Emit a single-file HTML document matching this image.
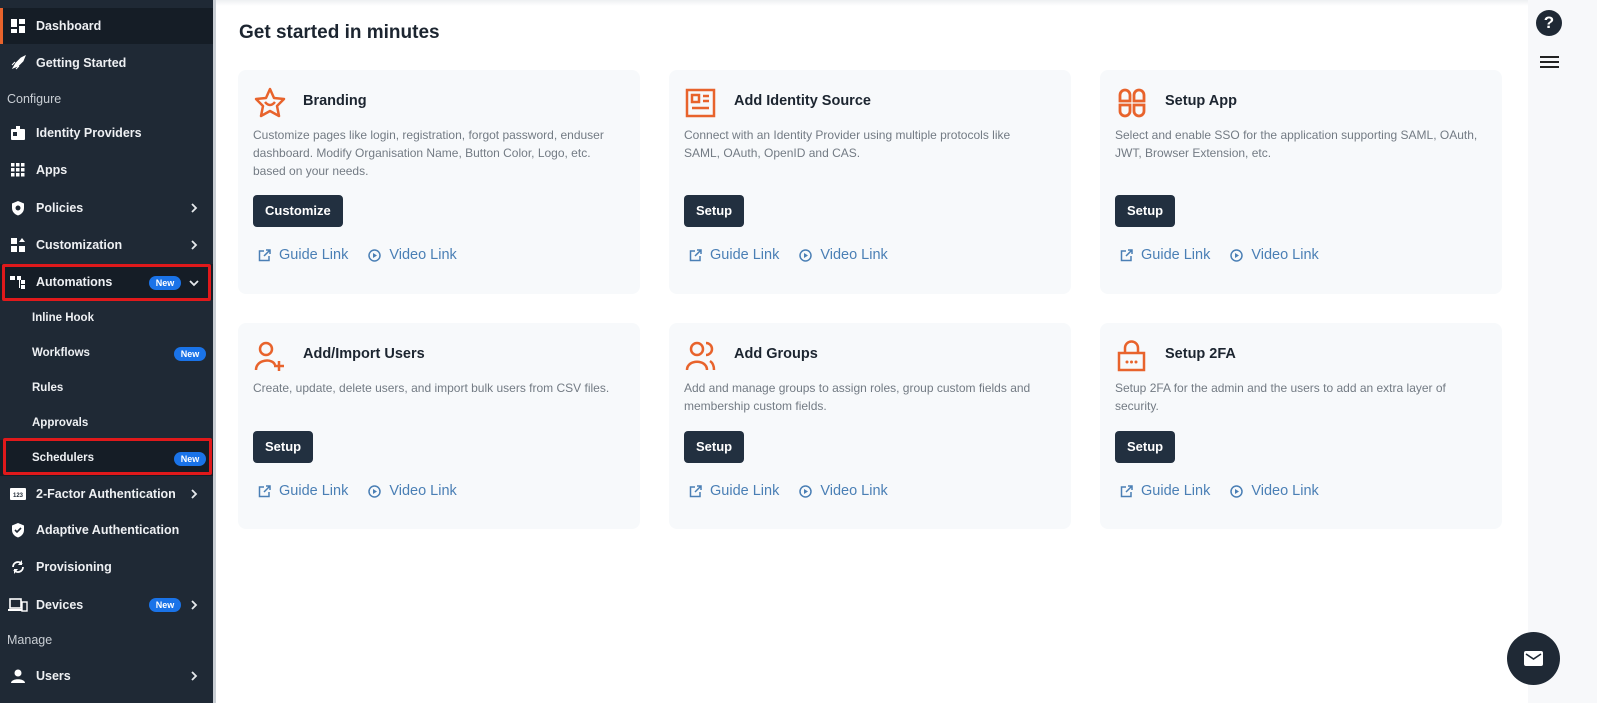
<!DOCTYPE html>
<html><head><meta charset="utf-8"><style>
*{box-sizing:border-box;margin:0;padding:0}
body{width:1597px;height:703px;overflow:hidden;background:#fff;font-family:"Liberation Sans",sans-serif;position:relative}
.sb{position:absolute;left:0;top:0;width:213px;height:703px;background:#1f2935;color:#fff}
.sbar{position:absolute;left:213px;top:0;width:3px;height:703px;background:#c9ced4}
.it{position:absolute;left:0;width:213px;height:36px;display:flex;align-items:center;font-size:12.5px;font-weight:bold;color:#eef0f3}
.it .ic{width:16px;height:16px;margin:0 10px 0 10px;display:flex;align-items:center;justify-content:center}
.sub{padding-left:32px;font-size:11.5px}
.sec{position:absolute;left:7px;font-size:12.5px;color:#c9ced4}
.new{position:absolute;background:#1a73e8;color:#fff;font-size:9px;font-weight:bold;border-radius:8px;padding:2px 0;width:32px;text-align:center}
.chev{position:absolute;left:190px}
.red{position:absolute;border:3px solid #e0191b;border-radius:2px}
h1{position:absolute;left:239px;top:22px;font-size:19px;font-weight:bold;color:#1c2530}
.card{position:absolute;width:402px;background:#f7f9fb;border-radius:8px}
.card .ti{position:absolute;left:65px;top:23px;font-size:14.5px;font-weight:bold;color:#1c2530}
.card .ico{position:absolute;left:15px;top:16px;width:34px;height:34px}
.card p{position:absolute;left:15px;top:56px;white-space:nowrap;font-size:12px;line-height:18px;color:#737b84}
.btn{position:absolute;left:15px;background:#223040;color:#fff;font-size:13px;font-weight:bold;border-radius:4px;height:32px;line-height:32px;padding:0 12px}
.lk{position:absolute;left:20px;font-size:14.5px;color:#4a7fb5;display:flex;align-items:center}
.lk svg{margin-right:8px}
.rs{position:absolute;left:1528px;top:0;width:69px;height:703px;background:#f7f8fa}
</style></head><body>
<div class="sb">
 <div class="it" style="top:8px;background:#151d26"><div style="position:absolute;left:0;top:0;width:3px;height:36px;background:#e8632c"></div><span class="ic"><svg width="16" height="16"><rect x="1" y="1" width="6" height="8" fill="#fff"/><rect x="9" y="1" width="6" height="5" fill="#fff"/><rect x="1" y="11" width="6" height="4" fill="#fff"/><rect x="9" y="8" width="6" height="7" fill="#fff"/></svg></span>Dashboard</div>
 <div class="it" style="top:45px"><span class="ic"><svg width="16" height="16"><path d="M3 13 L6 8 L11 3 L15 1 L13 6 L8 11Z M2 10 L5 7 M6 14 L9 11" fill="#fff" stroke="#fff"/></svg></span>Getting Started</div>
 <div class="sec" style="top:92px">Configure</div>
 <div class="it" style="top:115px"><span class="ic"><svg width="16" height="16"><rect x="1" y="4" width="14" height="11" rx="1" fill="#fff"/><rect x="6" y="1" width="4" height="4" fill="#fff"/><rect x="3" y="7" width="4" height="4" fill="#1f2935"/></svg></span>Identity Providers</div>
 <div class="it" style="top:152px"><span class="ic"><svg width="14" height="14"><g fill="#fff"><rect x="0" y="0" width="3.5" height="3.5"/><rect x="5" y="0" width="3.5" height="3.5"/><rect x="10" y="0" width="3.5" height="3.5"/><rect x="0" y="5" width="3.5" height="3.5"/><rect x="5" y="5" width="3.5" height="3.5"/><rect x="10" y="5" width="3.5" height="3.5"/><rect x="0" y="10" width="3.5" height="3.5"/><rect x="5" y="10" width="3.5" height="3.5"/><rect x="10" y="10" width="3.5" height="3.5"/></g></svg></span>Apps</div>
 <div class="it" style="top:190px"><span class="ic"><svg width="16" height="16"><path d="M8 1 L14 3.5 V8 C14 12 11 14.5 8 15.5 C5 14.5 2 12 2 8 V3.5Z" fill="#fff"/><circle cx="8" cy="8" r="2.5" fill="#1f2935"/></svg></span>Policies</div><svg class="chev" style="top:203px" width="8" height="10"><path d="M2 1 L6 5 L2 9" stroke="#e6e9ec" stroke-width="1.8" fill="none"/></svg>
 <div class="it" style="top:227px"><span class="ic"><svg width="16" height="16"><g fill="#fff"><rect x="1" y="1" width="6" height="6"/><rect x="1" y="9" width="6" height="6"/><rect x="9" y="9" width="6" height="6"/><path d="M12 1 L15 5 H9Z"/></g></svg></span>Customization</div><svg class="chev" style="top:240px" width="8" height="10"><path d="M2 1 L6 5 L2 9" stroke="#e6e9ec" stroke-width="1.8" fill="none"/></svg>
 <div class="it" style="top:264px;background:#151d26"><span class="ic"><svg width="16" height="16"><g fill="#fff"><rect x="0" y="2" width="5" height="4"/><rect x="7" y="2" width="4" height="4"/><rect x="11" y="6" width="4" height="4"/><rect x="11" y="11" width="4" height="4"/><rect x="9" y="6" width="1" height="8"/></g></svg></span>Automations</div>
 <span class="new" style="left:149px;top:276px">New</span><svg class="chev" style="left:189px;top:279px" width="10" height="8"><path d="M1 2 L5 6 L9 2" stroke="#e6e9ec" stroke-width="1.8" fill="none"/></svg>
 <div class="red" style="left:2px;top:264px;width:209px;height:37px"></div>
 <div class="it sub" style="top:300px">Inline Hook</div>
 <div class="it sub" style="top:335px">Workflows</div><span class="new" style="left:174px;top:347px">New</span>
 <div class="it sub" style="top:370px">Rules</div>
 <div class="it sub" style="top:405px">Approvals</div>
 <div class="it sub" style="top:440px;background:#151d26">Schedulers</div><span class="new" style="left:174px;top:452px">New</span>
 <div class="red" style="left:3px;top:438px;width:209px;height:37px"></div>
 <div class="it" style="top:476px"><span class="ic"><svg width="16" height="12"><rect x="0" y="0" width="16" height="12" rx="1" fill="#fff"/><text x="8" y="9" font-size="6" text-anchor="middle" fill="#1f2935" font-family="Liberation Sans">123</text></svg></span>2-Factor Authentication</div><svg class="chev" style="top:489px" width="8" height="10"><path d="M2 1 L6 5 L2 9" stroke="#e6e9ec" stroke-width="1.8" fill="none"/></svg>
 <div class="it" style="top:512px"><span class="ic"><svg width="16" height="16"><path d="M8 1 L14 3.5 V8 C14 12 11 14.5 8 15.5 C5 14.5 2 12 2 8 V3.5Z" fill="#fff"/><path d="M5 8 L7 10 L11 6" stroke="#1f2935" stroke-width="1.6" fill="none"/></svg></span>Adaptive Authentication</div>
 <div class="it" style="top:549px"><span class="ic"><svg width="16" height="16"><path d="M3 8 A5 5 0 0 1 12 5 M13 8 A5 5 0 0 1 4 11" stroke="#fff" stroke-width="1.8" fill="none"/><path d="M12 1 V6 H8Z M4 15 V10 H8Z" fill="#fff"/></svg></span>Provisioning</div>
 <div class="it" style="top:587px"><span class="ic" style="margin-left:8px;margin-right:8px;width:20px"><svg width="20" height="14"><rect x="2" y="1" width="11" height="9" stroke="#fff" stroke-width="1.6" fill="none"/><rect x="0" y="11" width="14" height="2" fill="#fff"/><rect x="14" y="4" width="5" height="9" stroke="#fff" stroke-width="1.4" fill="#1f2935"/></svg></span>Devices</div>
 <span class="new" style="left:149px;top:598px">New</span><svg class="chev" style="top:600px" width="8" height="10"><path d="M2 1 L6 5 L2 9" stroke="#e6e9ec" stroke-width="1.8" fill="none"/></svg>
 <div class="sec" style="top:633px">Manage</div>
 <div class="it" style="top:658px"><span class="ic"><svg width="16" height="16"><circle cx="8" cy="5" r="3.5" fill="#fff"/><path d="M1 15 C1 10 15 10 15 15Z" fill="#fff"/></svg></span>Users</div><svg class="chev" style="top:671px" width="8" height="10"><path d="M2 1 L6 5 L2 9" stroke="#e6e9ec" stroke-width="1.8" fill="none"/></svg>
</div>
<div class="sbar"></div>
<div class="rs"></div>
<div style="position:absolute;left:216px;top:0;width:1312px;height:6px;background:linear-gradient(#eef0f2,#fff)"></div>
<h1>Get started in minutes</h1>

<div class="card" style="left:238px;top:70px;height:224px">
 <svg class="ico" viewBox="0 0 34 34"><path d="M17 3 L21 12 L31 13 L24 20 L26 30 L17 25 L8 30 L10 20 L3 13 L13 12Z" fill="none" stroke="#e8632c" stroke-width="2.5" stroke-linejoin="round"/><path d="M12 16 Q17 22 22 16" fill="none" stroke="#e8632c" stroke-width="2.5"/></svg>
 <div class="ti">Branding</div>
 <p>Customize pages like login, registration, forgot password, enduser<br>dashboard. Modify Organisation Name, Button Color, Logo, etc.<br>based on your needs.</p>
 <div class="btn" style="top:125px">Customize</div>
 <div class="lk" style="top:177px"><svg width="13" height="13"><path d="M6 2 H1.5 V11.5 H11 V7 M8 1 H12 V5 M12 1 L6 7" stroke="#4a7fb5" stroke-width="1.5" fill="none"/></svg>Guide Link<span style="width:20px"></span><svg width="13" height="13"><circle cx="6.5" cy="6.5" r="5.5" stroke="#4a7fb5" stroke-width="1.5" fill="none"/><path d="M5 4 L9 6.5 L5 9Z" fill="#4a7fb5"/></svg>Video Link</div>
</div>
<div class="card" style="left:669px;top:70px;height:224px">
 <svg class="ico" viewBox="0 0 34 34"><rect x="3" y="4" width="27" height="26" fill="none" stroke="#e8632c" stroke-width="2.5"/><rect x="8" y="9" width="7" height="7" fill="none" stroke="#e8632c" stroke-width="2.5"/><path d="M19 10 H25 M19 15 H25 M8 22 H25" stroke="#e8632c" stroke-width="2.5"/></svg>
 <div class="ti">Add Identity Source</div>
 <p>Connect with an Identity Provider using multiple protocols like<br>SAML, OAuth, OpenID and CAS.</p>
 <div class="btn" style="top:125px">Setup</div>
 <div class="lk" style="top:177px"><svg width="13" height="13"><path d="M6 2 H1.5 V11.5 H11 V7 M8 1 H12 V5 M12 1 L6 7" stroke="#4a7fb5" stroke-width="1.5" fill="none"/></svg>Guide Link<span style="width:20px"></span><svg width="13" height="13"><circle cx="6.5" cy="6.5" r="5.5" stroke="#4a7fb5" stroke-width="1.5" fill="none"/><path d="M5 4 L9 6.5 L5 9Z" fill="#4a7fb5"/></svg>Video Link</div>
</div>
<div class="card" style="left:1100px;top:70px;height:224px">
 <svg class="ico" viewBox="0 0 34 34"><g fill="none" stroke="#e8632c" stroke-width="2.8"><path d="M5 15 V9 A5 5 0 0 1 15 9 V15Z"/><path d="M19 15 V9 A5 5 0 0 1 29 9 V15Z"/><path d="M5 19 V25 A5 5 0 0 0 15 25 V19Z"/><path d="M19 19 V25 A5 5 0 0 0 29 25 V19Z"/></g></svg>
 <div class="ti">Setup App</div>
 <p>Select and enable SSO for the application supporting SAML, OAuth,<br>JWT, Browser Extension, etc.</p>
 <div class="btn" style="top:125px">Setup</div>
 <div class="lk" style="top:177px"><svg width="13" height="13"><path d="M6 2 H1.5 V11.5 H11 V7 M8 1 H12 V5 M12 1 L6 7" stroke="#4a7fb5" stroke-width="1.5" fill="none"/></svg>Guide Link<span style="width:20px"></span><svg width="13" height="13"><circle cx="6.5" cy="6.5" r="5.5" stroke="#4a7fb5" stroke-width="1.5" fill="none"/><path d="M5 4 L9 6.5 L5 9Z" fill="#4a7fb5"/></svg>Video Link</div>
</div>
<div class="card" style="left:238px;top:323px;height:206px">
 <svg class="ico" viewBox="0 0 34 34"><circle cx="13" cy="10" r="6" fill="none" stroke="#e8632c" stroke-width="2.5"/><path d="M3 31 C3 20 20 19 22 26" fill="none" stroke="#e8632c" stroke-width="2.5"/><path d="M26 22 V32 M21 27 H31" stroke="#e8632c" stroke-width="2.5"/></svg>
 <div class="ti">Add/Import Users</div>
 <p>Create, update, delete users, and import bulk users from CSV files.</p>
 <div class="btn" style="top:108px">Setup</div>
 <div class="lk" style="top:160px"><svg width="13" height="13"><path d="M6 2 H1.5 V11.5 H11 V7 M8 1 H12 V5 M12 1 L6 7" stroke="#4a7fb5" stroke-width="1.5" fill="none"/></svg>Guide Link<span style="width:20px"></span><svg width="13" height="13"><circle cx="6.5" cy="6.5" r="5.5" stroke="#4a7fb5" stroke-width="1.5" fill="none"/><path d="M5 4 L9 6.5 L5 9Z" fill="#4a7fb5"/></svg>Video Link</div>
</div>
<div class="card" style="left:669px;top:323px;height:206px">
 <svg class="ico" viewBox="0 0 34 34"><circle cx="13" cy="10" r="6" fill="none" stroke="#e8632c" stroke-width="2.5"/><path d="M3 31 C3 20 23 20 23 31" fill="none" stroke="#e8632c" stroke-width="2.5"/><path d="M22 4 A6 6 0 0 1 22 16 M26 22 C29 24 30 27 30 31" fill="none" stroke="#e8632c" stroke-width="2.5"/></svg>
 <div class="ti">Add Groups</div>
 <p>Add and manage groups to assign roles, group custom fields and<br>membership custom fields.</p>
 <div class="btn" style="top:108px">Setup</div>
 <div class="lk" style="top:160px"><svg width="13" height="13"><path d="M6 2 H1.5 V11.5 H11 V7 M8 1 H12 V5 M12 1 L6 7" stroke="#4a7fb5" stroke-width="1.5" fill="none"/></svg>Guide Link<span style="width:20px"></span><svg width="13" height="13"><circle cx="6.5" cy="6.5" r="5.5" stroke="#4a7fb5" stroke-width="1.5" fill="none"/><path d="M5 4 L9 6.5 L5 9Z" fill="#4a7fb5"/></svg>Video Link</div>
</div>
<div class="card" style="left:1100px;top:323px;height:206px">
 <svg class="ico" viewBox="0 0 34 34"><rect x="4" y="14" width="25" height="17" fill="none" stroke="#e8632c" stroke-width="2.5"/><path d="M10 14 V9 A6.5 6.5 0 0 1 23 9 V14" fill="none" stroke="#e8632c" stroke-width="2.5"/><g fill="#e8632c"><circle cx="12" cy="23" r="1.5"/><circle cx="16.5" cy="23" r="1.5"/><circle cx="21" cy="23" r="1.5"/></g></svg>
 <div class="ti">Setup 2FA</div>
 <p>Setup 2FA for the admin and the users to add an extra layer of<br>security.</p>
 <div class="btn" style="top:108px">Setup</div>
 <div class="lk" style="top:160px"><svg width="13" height="13"><path d="M6 2 H1.5 V11.5 H11 V7 M8 1 H12 V5 M12 1 L6 7" stroke="#4a7fb5" stroke-width="1.5" fill="none"/></svg>Guide Link<span style="width:20px"></span><svg width="13" height="13"><circle cx="6.5" cy="6.5" r="5.5" stroke="#4a7fb5" stroke-width="1.5" fill="none"/><path d="M5 4 L9 6.5 L5 9Z" fill="#4a7fb5"/></svg>Video Link</div>
</div>

<div style="position:absolute;left:1536px;top:10px;width:26px;height:26px;border-radius:50%;background:#1f2935;color:#fff;font-weight:bold;font-size:17px;text-align:center;line-height:26px">?</div>
<div style="position:absolute;left:1540px;top:56px;width:19px;height:2px;background:#222;box-shadow:0 5px 0 #222,0 10px 0 #222"></div>
<div style="position:absolute;left:1507px;top:632px;width:53px;height:53px;border-radius:50%;background:#1f2935"><svg style="position:absolute;left:17px;top:19px" width="19" height="15"><rect x="0" y="0" width="19" height="15" rx="2" fill="#fff"/><path d="M2 3 L9.5 8 L17 3" stroke="#1f2935" stroke-width="1.6" fill="none"/></svg></div>
</body></html>
